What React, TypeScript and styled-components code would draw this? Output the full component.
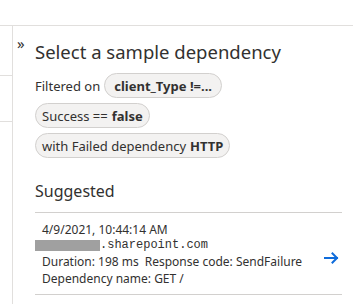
import React from 'react';
import styled, { createGlobalStyle } from 'styled-components';

const GlobalStyle = createGlobalStyle`
  html, body {
    margin: 0;
    padding: 0;
    background: #ffffff;
  }
  body {
    font-family: "Noto Sans", "Open Sans", sans-serif;
    color: #323130;
  }
`;

const Page = styled.div`
  width: 353px;
  height: 304px;
  overflow: hidden;
  background: #fff;
`;

const TopBar = styled.div`
  height: 25px;
  border-bottom: 1px solid #e1dfdd;
`;

const Body = styled.div`
  display: flex;
  height: 278px;
`;

const LeftStrip = styled.div`
  width: 12px;
  flex-shrink: 0;
  border-right: 1px solid #e1dfdd;
`;

const StripRow = styled.div<{ h: number }>`
  height: ${(p) => p.h}px;
  border-bottom: 1px solid #e1dfdd;
`;

const Panel = styled.div`
  flex: 1;
  display: flex;
  padding: 14px 11px 0 4px;
`;

const Collapse = styled.span`
  width: 18px;
  flex-shrink: 0;
  font-size: 15px;
  line-height: 14px;
  color: #323130;
  margin-top: -4px;
`;

const Content = styled.div`
  flex: 1;
  display: flex;
  flex-direction: column;
`;

const Title = styled.h2`
  margin: 0;
  font-size: 18.5px;
  font-weight: 400;
  line-height: 24px;
  white-space: nowrap;
`;

const Filters = styled.div`
  display: flex;
  flex-direction: column;
  align-items: flex-start;
  gap: 5px;
  margin-top: 9px;
`;

const FilterRow = styled.div`
  display: flex;
  align-items: center;
  gap: 4px;
  font-size: 13px;
`;

const Pill = styled.span<{ strong?: boolean }>`
  display: inline-flex;
  align-items: center;
  gap: 4px;
  height: 23px;
  padding: 0 ${(p) => (p.strong ? 9 : 6)}px;
  border: 1px solid #d2d0ce;
  border-radius: 13px;
  background: #f3f2f1;
  font-size: 13px;
  white-space: nowrap;
  font-weight: ${(p) => (p.strong ? 700 : 400)};
`;

const Bold = styled.b`
  font-weight: 700;
`;

const SectionTitle = styled.h3`
  margin: 22px 0 0 0;
  font-size: 16px;
  font-weight: 400;
  line-height: 22px;
`;

const Card = styled.div`
  margin-top: 10px;
  border-top: 1px solid #d2d0ce;
  border-bottom: 1px solid #d2d0ce;
  padding: 8px 0 7px 7px;
  display: flex;
  align-items: center;
`;

const CardBody = styled.div`
  flex: 1;
  font-size: 12px;
  line-height: 17px;
`;

const Line = styled.div`
  white-space: nowrap;
`;

const Host = styled.div`
  display: flex;
  align-items: center;
  margin-left: -7px;
  height: 15px;
`;

const Redacted = styled.span`
  display: inline-block;
  width: 65px;
  height: 11px;
  background: #a0a0a0;
`;

const Mono = styled.span`
  font-family: "Liberation Mono", monospace;
  font-size: 12px;
`;

const Gap = styled.span`
  display: inline-block;
  width: 6px;
`;

const ArrowBox = styled.div`
  width: 18px;
  display: flex;
  justify-content: center;
  color: #0f6cdb;
  margin: 8px 2px 0 0;
`;

export default function App() {
  return (
    <Page>
      <GlobalStyle />
      <TopBar />
      <Body>
        <LeftStrip>
          <StripRow h={49} />
          <StripRow h={45} />
        </LeftStrip>
        <Panel>
          <Collapse>»</Collapse>
          <Content>
            <Title>Select a sample dependency</Title>
            <Filters>
              <FilterRow>
                Filtered on
                <Pill strong>client_Type !=...</Pill>
              </FilterRow>
              <Pill>
                Success == <Bold>false</Bold>
              </Pill>
              <Pill>
                with Failed dependency <Bold>HTTP</Bold>
              </Pill>
            </Filters>
            <SectionTitle>Suggested</SectionTitle>
            <Card>
              <CardBody>
                <Line>4/9/2021, 10:44:14 AM</Line>
                <Host>
                  <Redacted />
                  <Mono>.sharepoint.com</Mono>
                </Host>
                <Line>
                  Duration: 198 ms<Gap />Response code: SendFailure
                </Line>
                <Line>Dependency name: GET /</Line>
              </CardBody>
              <ArrowBox>
                <svg width="15" height="12" viewBox="0 0 15 12" fill="none">
                  <path d="M1 6h12M8.5 1.5L13 6l-4.5 4.5" stroke="currentColor" strokeWidth="2" strokeLinecap="square" />
                </svg>
              </ArrowBox>
            </Card>
          </Content>
        </Panel>
      </Body>
    </Page>
  );
}
